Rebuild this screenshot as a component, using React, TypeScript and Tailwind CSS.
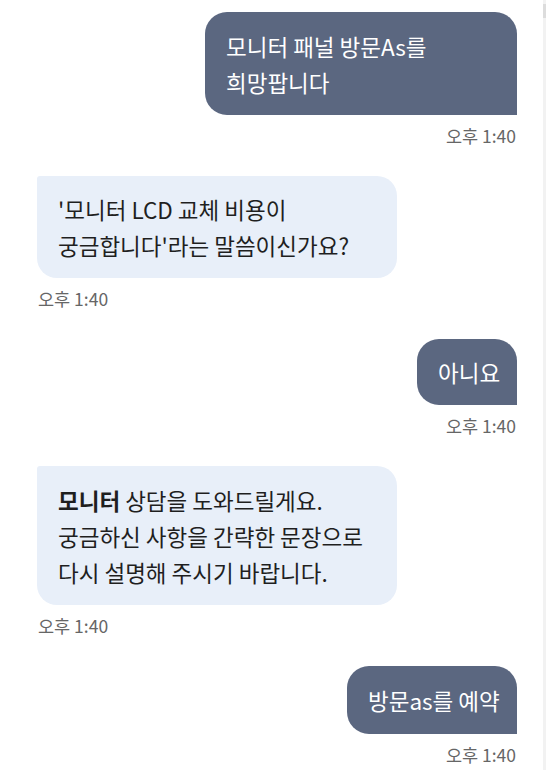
import type { ReactNode } from 'react'

type Side = 'me' | 'bot'

interface MessageProps {
  side: Side
  width: string
  pad: string
  children: ReactNode
}

function Message({ side, width, pad, children }: MessageProps) {
  const isMe = side === 'me'

  return (
    <div className={isMe ? 'flex flex-col items-end' : 'flex flex-col items-start'}>
      <div
        className={
          isMe
            ? `${width} ${pad} px-[21px] bg-[#5b6780] text-white rounded-[22px] rounded-br-none`
            : `${width} ${pad} px-[21px] bg-[#e8eff9] text-[#1f1f1f] rounded-[20px] rounded-tl-[3px]`
        }
      >
        <p className="text-[22.5px] leading-[36px] whitespace-nowrap">{children}</p>
      </div>
      <span
        className={
          isMe
            ? 'mt-[11px] mr-px text-[17.5px] leading-5 text-[#666666]'
            : 'mt-[11px] ml-px text-[17.5px] leading-5 text-[#666666]'
        }
      >
        오후 1:40
      </span>
    </div>
  )
}

export default function App() {
  return (
    <div
      className="w-[546px] h-[770px] bg-white flex overflow-hidden"
      style={{ fontFamily: '"Noto Sans CJK KR", "Noto Sans", sans-serif' }}
    >
      <div className="flex-1 flex flex-col gap-[30px] pt-3 pl-[37px] pr-[26px]">
        <Message side="me" width="w-[312px]" pad="pt-4 pb-[15px]">
          모니터 패널 방문As를
          <br />
          희망팝니다
        </Message>

        <Message side="bot" width="w-[360px]" pad="py-[15px]">
          '모니터 LCD 교체 비용이
          <br />
          궁금합니다'라는 말씀이신가요?
        </Message>

        <Message side="me" width="w-[100px]" pad="py-[15px]">
          아니요
        </Message>

        <Message side="bot" width="w-[360px]" pad="pt-4 pb-[15px]">
          <span className="font-bold">모니터</span> 상담을 도와드릴게요.
          <br />
          궁금하신 사항을 간략한 문장으로
          <br />
          다시 설명해 주시기 바랍니다.
        </Message>

        <Message side="me" width="w-[170px]" pad="py-4">
          방문as를 예약
        </Message>
      </div>

      {/* scroll track */}
      <div className="w-[3px] h-full bg-[#f2f2f2] flex flex-col">
        <div className="mt-1 h-[14px] bg-[#dcdcdc]" />
      </div>
    </div>
  )
}
